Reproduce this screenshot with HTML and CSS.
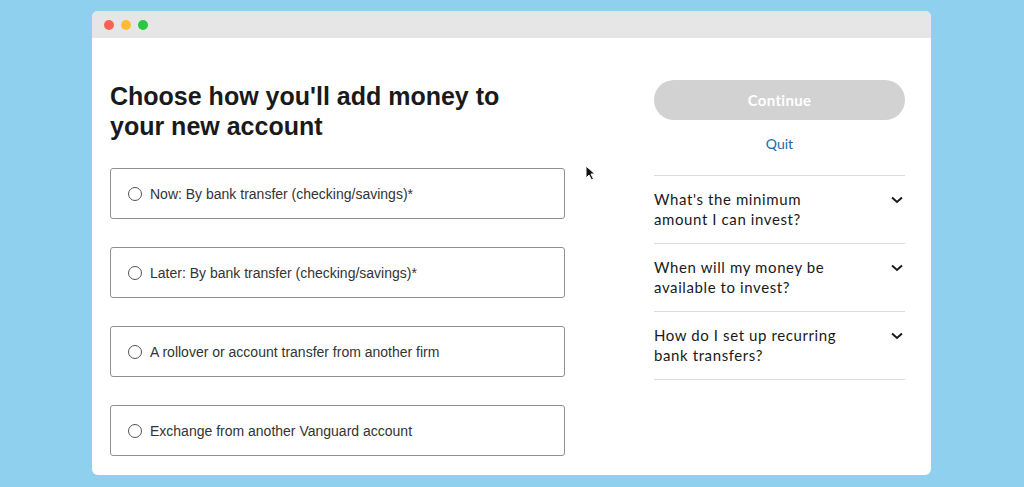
FILE: index.html
```html
<!DOCTYPE html>
<html>
<head>
    <title>Add money</title>
    <meta name="viewport" content="width=device-width, initial-scale=1">
    <link rel="stylesheet" href="styles.css">
</head>
<body>
    <div class="window">
        <div class="titlebar">
            <span class="dot red"></span>
            <span class="dot yellow"></span>
            <span class="dot green"></span>
        </div>
        <div class="content">
            <div class="left">
                <h1>Choose how you'll add money to your new account</h1>
                <label class="option"><span class="radio"></span>Now: By bank transfer (checking/savings)*</label>
                <label class="option"><span class="radio"></span>Later: By bank transfer (checking/savings)*</label>
                <label class="option"><span class="radio"></span>A rollover or account transfer from another firm</label>
                <label class="option"><span class="radio"></span>Exchange from another Vanguard account</label>
            </div>
            <div class="right">
                <button class="continue">Continue</button>
                <a class="quit" href="#">Quit</a>
                <div class="faq">
                    <div class="faq-item">
                        <span>What's the minimum amount I can invest?</span>
                        <svg class="chevron" width="12" height="8" viewBox="0 0 12 8"><path d="M1 1.5 L6 6 L11 1.5" fill="none" stroke="#1a1a1a" stroke-width="2"/></svg>
                    </div>
                    <div class="faq-item">
                        <span>When will my money be available to invest?</span>
                        <svg class="chevron" width="12" height="8" viewBox="0 0 12 8"><path d="M1 1.5 L6 6 L11 1.5" fill="none" stroke="#1a1a1a" stroke-width="2"/></svg>
                    </div>
                    <div class="faq-item">
                        <span>How do I set up recurring bank transfers?</span>
                        <svg class="chevron" width="12" height="8" viewBox="0 0 12 8"><path d="M1 1.5 L6 6 L11 1.5" fill="none" stroke="#1a1a1a" stroke-width="2"/></svg>
                    </div>
                </div>
            </div>
        </div>
        <svg class="cursor" width="12" height="17" viewBox="0 0 12 17"><path d="M1 1 L1 13 L4 10 L6.5 15 L8.5 14 L6 9 L10 9 Z" fill="#111" stroke="#fff" stroke-width="1"/></svg>
    </div>
</body>
</html>
```

FILE: styles.css
```css
html {
    background-color: #8fd0ee;
}
body {
    margin: 0;
    padding: 11px 0 0 92px;
    font-family: "Liberation Sans", Arial, sans-serif;
}
.window {
    position: relative;
    width: 839px;
    height: 464px;
    background-color: #fff;
    border-radius: 6px;
    overflow: hidden;
}
.titlebar {
    height: 27px;
    background-color: #e6e6e6;
    display: flex;
    align-items: center;
    gap: 7px;
    padding-left: 12px;
}
.dot {
    width: 10px;
    height: 10px;
    border-radius: 50%;
    display: inline-block;
}
.red { background-color: #fe5f57; }
.yellow { background-color: #febc2e; }
.green { background-color: #28c840; }
.content {
    display: flex;
    padding: 38px 0 0 18px;
}
.left {
    width: 455px;
}
h1 {
    margin: 5px 0 27px;
    font-size: 25px;
    line-height: 30px;
    font-weight: bold;
    color: #1a1a1a;
    width: 430px;
}
.option {
    display: flex;
    align-items: center;
    height: 49px;
    border: 1px solid #8f8f8f;
    border-radius: 3px;
    margin-bottom: 28px;
    padding-left: 17px;
    font-size: 14px;
    color: #333;
}
.radio {
    width: 12px;
    height: 12px;
    border: 1.5px solid #555;
    border-radius: 50%;
    margin-right: 8px;
}
.right {
    width: 251px;
    margin: 4px 0 0 89px;
    font-family: Lato, "Open Sans", sans-serif;
}
.continue {
    display: block;
    width: 100%;
    height: 40px;
    border: none;
    border-radius: 20px;
    background-color: #d2d2d2;
    color: #fff;
    font-family: Lato, sans-serif;
    font-size: 15px;
    font-weight: bold;
    letter-spacing: 0.3px;
}
.quit {
    display: block;
    margin-top: 14px;
    text-align: center;
    color: #1a68a6;
    text-decoration: none;
    font-size: 14px;
    line-height: 20px;
}
.faq {
    margin-top: 21px;
    border-top: 1px solid #dcdcdc;
}
.faq-item {
    display: flex;
    justify-content: space-between;
    align-items: flex-start;
    padding: 13px 0 14px;
    border-bottom: 1px solid #dcdcdc;
    font-size: 15px;
    line-height: 20px;
    letter-spacing: 0.6px;
    color: #1a1a1a;
}
.faq-item span {
    width: 192px;
}
.chevron {
    margin: 7px 2px 0 0;
}
.cursor {
    position: absolute;
    left: 493px;
    top: 154px;
}
```
